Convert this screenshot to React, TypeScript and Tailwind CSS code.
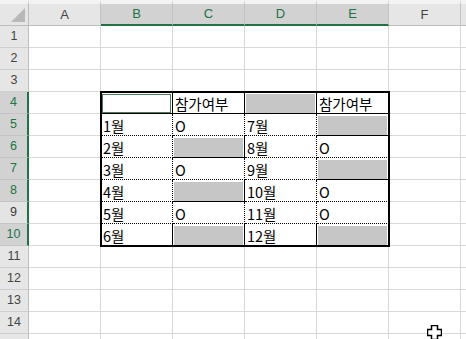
const COLS = ['A', 'B', 'C', 'D', 'E', 'F'];
const SEL_COLS = ['B', 'C', 'D', 'E'];
const ROWS = Array.from({ length: 15 }, (_, i) => i + 1);

type Cell = { text?: string; gray?: boolean; active?: boolean };

// table B4:E10
const TABLE: Cell[][] = [
  [{ active: true }, { text: '참가여부' }, { gray: true }, { text: '참가여부' }],
  [{ text: '1월' }, { text: 'O' }, { text: '7월' }, { gray: true }],
  [{ text: '2월' }, { gray: true }, { text: '8월' }, { text: 'O' }],
  [{ text: '3월' }, { text: 'O' }, { text: '9월' }, { gray: true }],
  [{ text: '4월' }, { gray: true }, { text: '10월' }, { text: 'O' }],
  [{ text: '5월' }, { text: 'O' }, { text: '11월' }, { text: 'O' }],
  [{ text: '6월' }, { gray: true }, { text: '12월' }, { gray: true }],
];

function inTable(col: string, row: number) {
  return SEL_COLS.includes(col) && row >= 4 && row <= 10;
}

function ColHeader({ col }: { col: string }) {
  const sel = SEL_COLS.includes(col);
  return (
    <div
      className={
        sel
          ? 'flex items-center justify-center border-t-4 border-t-[#f3f3f3] border-r border-r-[#c4c4c4] border-b-2 border-b-[#217346] bg-[#d2d2d2] text-[13px] text-[#217346]'
          : 'flex items-center justify-center border-t-4 border-t-[#f3f3f3] border-r border-r-[#c4c4c4] border-b border-b-[#bdbdbd] bg-[#e6e6e6] text-[13px] text-[#444444]'
      }
    >
      {col}
    </div>
  );
}

function RowHeader({ row }: { row: number }) {
  const sel = row >= 4 && row <= 10;
  const hover = row === 9;
  let cls =
    'flex items-center justify-center border-b border-b-[#cfcfcf] border-r border-r-[#bdbdbd] bg-[#e6e6e6] text-[12.5px] text-[#444444]';
  if (sel && !hover)
    cls =
      'flex items-center justify-center border-b border-b-[#c4c4c4] border-r-2 border-r-[#217346] bg-[#d2d2d2] text-[12.5px] text-[#217346]';
  if (sel && hover)
    cls =
      'flex items-center justify-center border-b border-b-[#c4c4c4] border-r-2 border-r-[#217346] bg-[#e4e4e4] text-[12.5px] text-[#3a3a3a]';
  // row 15 is only a sliver at the bottom edge, its number is not visible
  return <div className={cls}>{row < 15 ? row : null}</div>;
}

function TableCell({ cell, r }: { cell: Cell; r: number }) {
  let bottom = 'border-b border-dotted border-b-black';
  if (r === 0 || r === 6) bottom = 'border-b border-solid border-b-black';
  const right = 'border-r border-r-black';

  if (cell.gray || cell.active) {
    return (
      <div className={`flex ${bottom} ${right} border-solid px-[1px] pt-[2px]`}>
        {cell.gray ? (
          <div className="flex-1 bg-[#c6c6c6]" />
        ) : (
          <div className="flex-1 border border-[#4d7a5c]" />
        )}
      </div>
    );
  }
  return (
    <div className={`${right} ${bottom} pl-[2px] pt-[1px] text-[14.5px] leading-[21px] text-black whitespace-nowrap`}>
      {cell.text}
    </div>
  );
}

export default function App() {
  return (
    <div
      className="relative h-[339px] w-[466px] overflow-hidden bg-white"
      style={{ fontFamily: '"Liberation Sans", Arial, sans-serif' }}
    >
      <div className="grid grid-cols-[29px_repeat(6,72px)_1fr] grid-rows-[26px_repeat(15,22px)]">
        {/* corner */}
        <div className="flex items-end justify-end border-t-4 border-t-[#f3f3f3] border-r border-r-[#bdbdbd] border-b border-b-[#bdbdbd] bg-[#e6e6e6] pr-[3px] pb-[3px]">
          <svg width="14" height="14" viewBox="0 0 14 14">
            <polygon points="14,0 14,14 0,14" fill="#b8b8b8" />
          </svg>
        </div>
        {COLS.map((c) => (
          <ColHeader key={c} col={c} />
        ))}
        <div className="border-t-4 border-t-[#f3f3f3] border-b border-b-[#bdbdbd] bg-[#e6e6e6]" />

        {ROWS.map((r) => (
          <div key={r} className="contents">
            <RowHeader row={r} />
            {COLS.filter((c) => !inTable(c, r)).map((c) => (
              <div key={c} className="border-r border-b border-[#d9d9d9] bg-white" />
            ))}
            <div className="border-b border-[#d9d9d9] bg-white" />
          </div>
        ))}

        {/* bordered table B4:E10 */}
        <div
          className="relative z-10 col-start-3 col-end-7 row-start-5 row-end-12 grid grid-cols-4 grid-rows-7 bg-white outline-2 outline-solid outline-offset-[-1px] outline-black"
          style={{ fontFamily: '"Noto Sans CJK KR", "Noto Sans", sans-serif' }}
        >
          {TABLE.map((row, r) =>
            row.map((cell, c) => <TableCell key={`${r}-${c}`} cell={cell} r={r} />)
          )}
        </div>
      </div>

      {/* mouse cursor */}
      <svg className="absolute left-[427px] top-[325px]" width="15" height="15" viewBox="0 0 15 15">
        <path
          d="M4.5 0.5 H10.5 V4.5 H14.5 V10.5 H10.5 V14.5 H4.5 V10.5 H0.5 V4.5 H4.5 Z"
          fill="white"
          stroke="black"
          strokeWidth="1.5"
        />
      </svg>
    </div>
  );
}
